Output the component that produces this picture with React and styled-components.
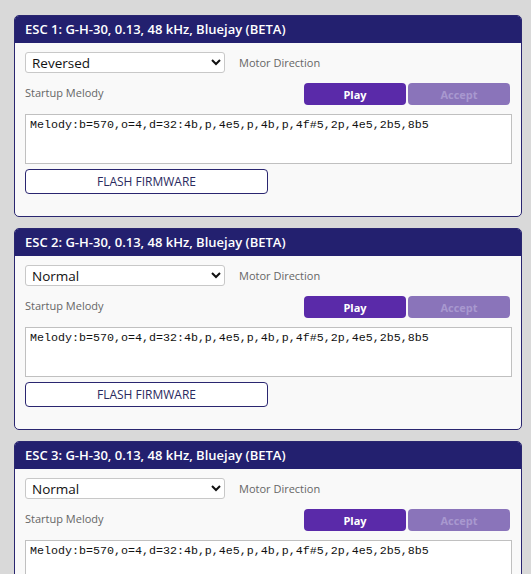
import React from "react";
import styled, { createGlobalStyle } from "styled-components";

const Global = createGlobalStyle`
  html, body { margin: 0; padding: 0; background: #d9d9d9; }
  body { font-family: "Open Sans", "Liberation Sans", sans-serif; }
`;

const Page = styled.div`
  display: flex;
  flex-direction: column;
  gap: 11px;
  padding: 15px 9px 20px 14px;
`;

const Card = styled.section`
  border: 1px solid #2a2670;
  border-radius: 5px;
  background: #f9f9f9;
  overflow: hidden;
`;

const Header = styled.div`
  background: #23206f;
  color: #fff;
  font-weight: 600;
  font-size: 13px;
  height: 27px;
  line-height: 27px;
  padding: 0 10px;
  white-space: nowrap;
`;

const Body = styled.div`
  display: flex;
  flex-direction: column;
  padding: 9px 10px 22px 10px;
`;

const Row = styled.div`
  display: flex;
  align-items: center;
  gap: 14px;
`;

const Select = styled.select`
  width: 200px;
  height: 21px;
  font-family: "Open Sans", "Liberation Sans", sans-serif;
  font-size: 13.5px;
  color: #111;
  background: #fff;
  border: 1px solid #c8c8c8;
  border-radius: 3px;
  padding: 0 2px;
  margin: 0;
`;

const Label = styled.span`
  font-size: 11px;
  color: #666;
  margin-bottom: ${(p) => (p.$raise ? "4px" : "0")};
`;

const MelodyRow = styled.div`
  display: flex;
  align-items: center;
  justify-content: space-between;
  margin-top: 10px;
`;

const Buttons = styled.div`
  display: flex;
  gap: 2px;
  margin-right: 1px;
`;

const PillButton = styled.button`
  width: 102px;
  height: 22px;
  border: none;
  border-radius: 4px;
  font-family: "Open Sans", "Liberation Sans", sans-serif;
  font-size: 11px;
  font-weight: 700;
  padding: 0;
  background: ${(p) => (p.$disabled ? "#8a74ba" : "#5a2aa9")};
  color: ${(p) => (p.$disabled ? "#a898cf" : "#fff")};
`;

const Melody = styled.textarea`
  box-sizing: border-box;
  margin-top: 9px;
  height: 50px;
  width: 487px;
  resize: none;
  border: 1px solid #c0c0c0;
  background: #fff;
  font-family: "Liberation Mono", "DejaVu Sans Mono", monospace;
  font-size: 11.67px;
  color: #111;
  padding: 3px 4px;
  line-height: 14px;
`;

const Flash = styled.button`
  margin-top: 5px;
  width: 243px;
  height: 25px;
  background: #fff;
  border: 1px solid #2a2670;
  border-radius: 4px;
  font-family: "Open Sans", "Liberation Sans", sans-serif;
  font-size: 12px;
  color: #2a2a5e;
  padding: 0;
`;

const melody = "Melody:b=570,o=4,d=32:4b,p,4e5,p,4b,p,4f#5,2p,4e5,2b5,8b5";

const escs = [
  { n: 1, dir: "Reversed" },
  { n: 2, dir: "Normal" },
  { n: 3, dir: "Normal" },
];

function EscCard({ n, dir }) {
  return (
    <Card>
      <Header>ESC {n}: G-H-30, 0.13, 48 kHz, Bluejay (BETA)</Header>
      <Body>
        <Row>
          <Select defaultValue={dir}>
            <option>Normal</option>
            <option>Reversed</option>
          </Select>
          <Label>Motor Direction</Label>
        </Row>
        <MelodyRow>
          <Label $raise>Startup Melody</Label>
          <Buttons>
            <PillButton>Play</PillButton>
            <PillButton $disabled>Accept</PillButton>
          </Buttons>
        </MelodyRow>
        <Melody defaultValue={melody} spellCheck={false} />
        <Flash>FLASH FIRMWARE</Flash>
      </Body>
    </Card>
  );
}

export default function App() {
  return (
    <Page>
      <Global />
      {escs.map((e) => (
        <EscCard key={e.n} {...e} />
      ))}
    </Page>
  );
}
